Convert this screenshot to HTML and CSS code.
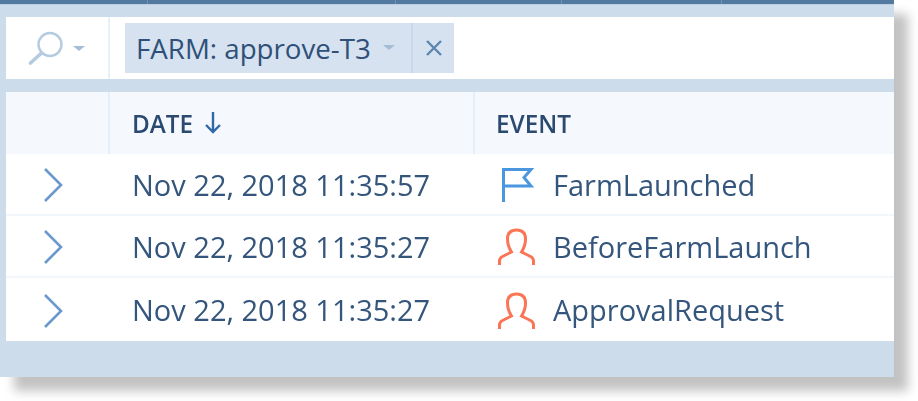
FILE: index.html

```html
<!DOCTYPE html>
<html lang="en">
<head>
    <meta charset="UTF-8">
    <title>Farm events</title>
    <link rel="stylesheet" href="styles.css">
</head>
<body>
    <div class="window">
        <div class="topbar">
            <span class="tab tab-a"></span>
            <span class="tab tab-b"></span>
            <span class="tab tab-c"></span>
            <span class="tab tab-d"></span>
        </div>

        <div class="filterbar">
            <div class="search">
                <svg class="search-icon" width="38" height="36" viewBox="0 0 38 36">
                    <circle cx="22" cy="14.5" r="11.5" fill="none" stroke="#b4cbe0" stroke-width="2.4"/>
                    <path d="M13.5 23 L2.5 33" fill="none" stroke="#b4cbe0" stroke-width="3.6" stroke-linecap="round"/>
                </svg>
                <span class="caret"></span>
            </div>
            <div class="chip">
                <div class="chip-label">FARM: approve-T3<span class="caret"></span></div>
                <div class="chip-close">
                    <svg width="18" height="18" viewBox="0 0 18 18">
                        <path d="M2 2 L16 16 M16 2 L2 16" fill="none" stroke="#5b86b0" stroke-width="2.4"/>
                    </svg>
                </div>
            </div>
        </div>

        <div class="table">
            <div class="row head">
                <div class="cell cell-toggle"></div>
                <div class="cell cell-date">DATE
                    <svg class="sort" width="18" height="24" viewBox="0 0 18 24">
                        <path d="M9 1 V21 M2 14 L9 21 L16 14" fill="none" stroke="#2f69a8" stroke-width="2.4"/>
                    </svg>
                </div>
                <div class="cell cell-event">EVENT</div>
            </div>

            <div class="row">
                <div class="cell cell-toggle">
                    <svg class="chevron" width="22" height="36" viewBox="0 0 22 36"><path d="M2 2 L18 18 L2 34" fill="none" stroke="#6c99cc" stroke-width="2.6"/></svg>
                </div>
                <div class="cell cell-date">Nov 22, 2018 11:35:57</div>
                <div class="cell cell-event">
                    <svg class="event-icon" width="40" height="38" viewBox="0 0 40 38">
                        <path d="M7.5 36 V3.5 H35 L28 11.5 L35 20 H7.5" fill="none" stroke="#4a97e0" stroke-width="3"/>
                    </svg>
                    FarmLaunched
                </div>
            </div>

            <div class="row">
                <div class="cell cell-toggle">
                    <svg class="chevron" width="22" height="36" viewBox="0 0 22 36"><path d="M2 2 L18 18 L2 34" fill="none" stroke="#6c99cc" stroke-width="2.6"/></svg>
                </div>
                <div class="cell cell-date">Nov 22, 2018 11:35:27</div>
                <div class="cell cell-event">
                    <svg class="event-icon" width="40" height="38" viewBox="0 0 40 38">
                        <path d="M3.5 37 V33 Q3.5 30 6.5 28.5 L15.5 24 Q11.5 18 11.5 11 Q11.5 2 20.5 2 Q29.5 2 29.5 11 Q29.5 18 25.5 24 L34.5 28.5 Q37.5 30 37.5 33 V37" fill="none" stroke="#fa7556" stroke-width="3"/>
                    </svg>
                    BeforeFarmLaunch
                </div>
            </div>

            <div class="row last">
                <div class="cell cell-toggle">
                    <svg class="chevron" width="22" height="36" viewBox="0 0 22 36"><path d="M2 2 L18 18 L2 34" fill="none" stroke="#6c99cc" stroke-width="2.6"/></svg>
                </div>
                <div class="cell cell-date">Nov 22, 2018 11:35:27</div>
                <div class="cell cell-event">
                    <svg class="event-icon" width="40" height="38" viewBox="0 0 40 38">
                        <path d="M3.5 37 V33 Q3.5 30 6.5 28.5 L15.5 24 Q11.5 18 11.5 11 Q11.5 2 20.5 2 Q29.5 2 29.5 11 Q29.5 18 25.5 24 L34.5 28.5 Q37.5 30 37.5 33 V37" fill="none" stroke="#fa7556" stroke-width="3"/>
                    </svg>
                    ApprovalRequest
                </div>
            </div>
        </div>
    </div>
</body>
</html>
```

FILE: styles.css

```css
html, body {
    height: 100%;
    overflow: hidden;
}
body {
    font-family: "Open Sans", sans-serif;
    background-color: #fff;
    margin: 0;
    padding: 0;
}
.window {
    width: 894px;
    height: 377px;
    background-color: #cddcea;
    box-shadow: 14px 14px 10px rgba(0, 0, 0, 0.24);
    filter: blur(0.5px);
    overflow: hidden;
}
.topbar {
    display: flex;
    height: 4px;
    background-color: #527aa0;
    border-bottom: 1px solid #bcd0e2;
    margin-bottom: 12px;
}
.tab {
    border-right: 1px solid #6f92b3;
}
.tab-a { width: 147px; }
.tab-b { width: 247px; }
.tab-c { width: 165px; }
.tab-d { width: 159px; }

.filterbar {
    display: flex;
    align-items: center;
    height: 62px;
    margin: 0 0 13px 6px;
    background-color: #fff;
}
.search {
    display: flex;
    align-items: center;
    width: 104px;
    height: 100%;
    padding-left: 22px;
    box-sizing: border-box;
    border-right: 2px solid #e9f1f8;
}
.caret {
    display: inline-block;
    width: 0;
    height: 0;
    border-left: 6.5px solid transparent;
    border-right: 6.5px solid transparent;
    border-top: 5px solid #a3bdd6;
    margin-left: 7px;
}
.chip {
    display: flex;
    height: 50px;
    margin-left: 15px;
    background-color: #d6e2f0;
    color: #2f5078;
    font-size: 27.7px;
}
.chip-label {
    display: flex;
    align-items: center;
    width: 288px;
    box-sizing: border-box;
    padding-left: 11px;
    padding-bottom: 1px;
    white-space: pre;
    border-right: 2px solid #c9d9ea;
}
.chip-label .caret {
    margin-left: 12px;
}
.chip-close {
    display: flex;
    align-items: center;
    justify-content: center;
    width: 41px;
}
.table {
    margin-left: 6px;
}
.row {
    display: flex;
    height: 62px;
    background-color: #fff;
    border-bottom: 2px solid #f2f7fc;
    box-sizing: border-box;
    color: #34557c;
    font-size: 29px;
}
.row.last {
    height: 63px;
    border-bottom: none;
}
.row.head {
    background-color: #f5f9fd;
    border-bottom: none;
    color: #2a4a70;
    font-size: 24.3px;
    font-weight: 600;
}
.cell {
    display: flex;
    align-items: center;
    box-sizing: border-box;
}
.cell-toggle {
    width: 104px;
    padding-left: 37px;
}
.cell-date {
    width: 365px;
    padding-left: 22px;
}
.cell-event {
    flex: 1;
    padding-left: 21px;
}
.head .cell-toggle, .head .cell-date {
    border-right: 2px solid #e6eff8;
}
.sort {
    margin-left: 11px;
}
.chevron, .event-icon {
    margin-top: 2px;
}
.event-icon {
    margin-right: 17px;
}
```
